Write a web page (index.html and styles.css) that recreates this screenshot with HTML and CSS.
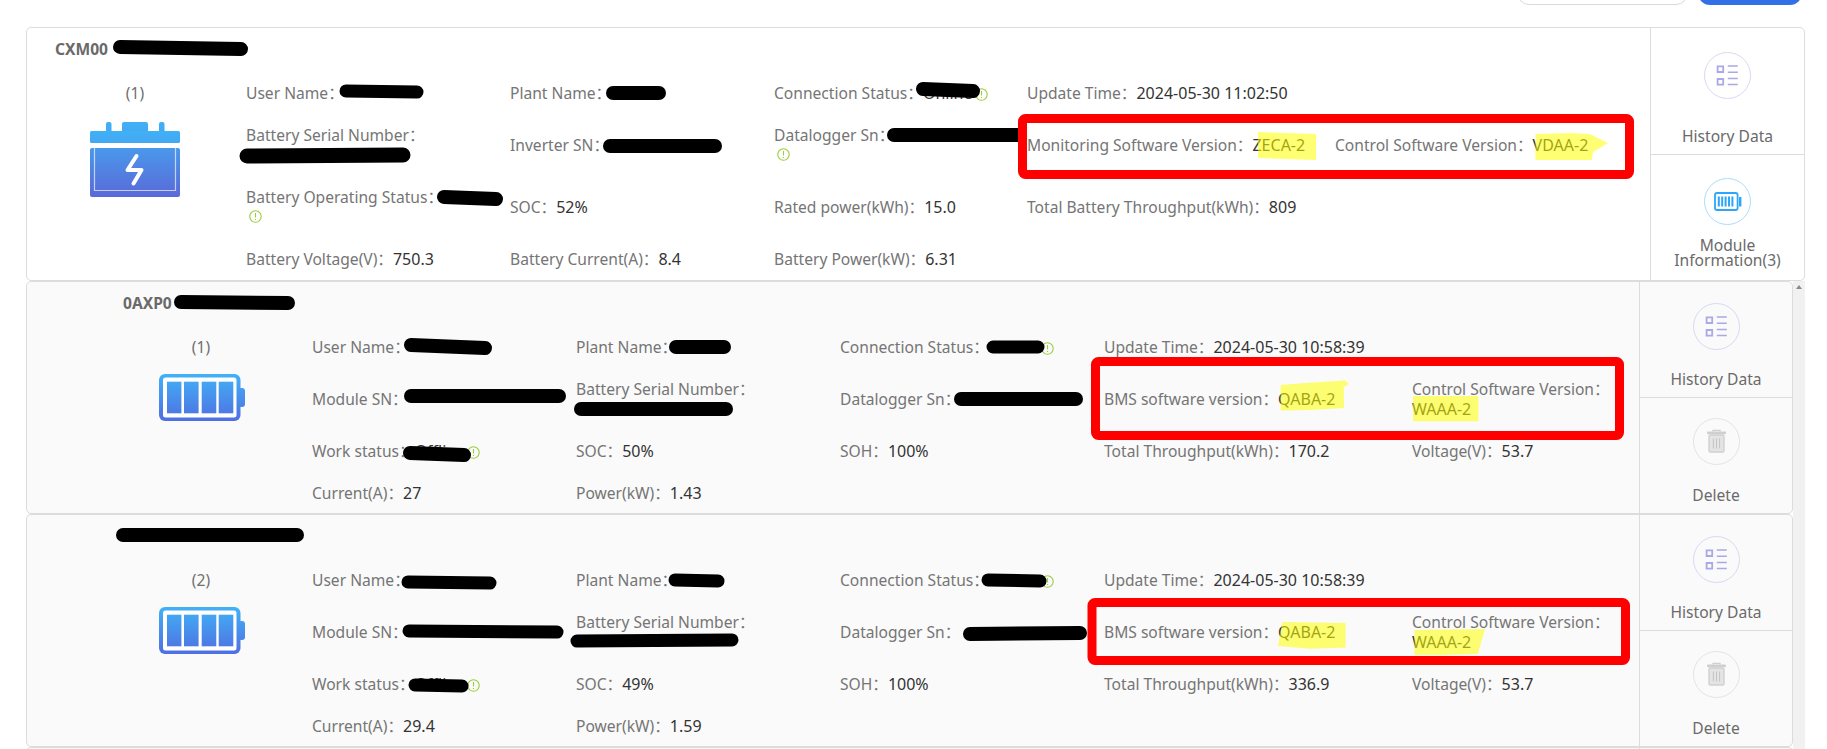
FILE: index.html
```html
<!DOCTYPE html>
<html lang="en">
<head>
<meta charset="utf-8">
<title>Battery modules</title>
<link rel="stylesheet" href="styles.css">
</head>
<body>
<svg width="0" height="0" class="defs">
  <defs>
    <linearGradient id="gTop" x1="0" y1="0" x2="0" y2="1"><stop offset="0" stop-color="#40b0f7"/><stop offset="1" stop-color="#44a8f3"/></linearGradient>
    <linearGradient id="gBox" x1="0" y1="0" x2="0" y2="1"><stop offset="0" stop-color="#4a98eb"/><stop offset="1" stop-color="#5a69d8"/></linearGradient>
    <linearGradient id="gCell" gradientUnits="userSpaceOnUse" x1="0" y1="0" x2="0" y2="47"><stop offset="0" stop-color="#41b1f7"/><stop offset="1" stop-color="#4f6fe1"/></linearGradient>
    <symbol id="i-info" viewBox="0 0 13 13">
      <circle cx="6.5" cy="6.5" r="5.7" fill="none" stroke="#9ccd3e" stroke-width="1.1"/>
      <path d="M6.5 3v4.6M6.5 9v1" stroke="#9ccd3e" stroke-width="1.1" fill="none"/>
    </symbol>
    <symbol id="i-history" viewBox="0 0 47 47">
      <circle cx="23.5" cy="23.5" r="23" fill="none" stroke="#d9d7f4"/>
      <path d="M13.6 14.3h5.6v5.7h-5.6zM13.6 27h5.6v5.7h-5.6z" fill="none" stroke="#aba8e6" stroke-width="1.8"/>
      <path d="M23.8 14h10M23.8 20.2h10M23.8 26.6h10M23.8 32.6h10" fill="none" stroke="#aba8e6" stroke-width="1.5"/>
    </symbol>
    <symbol id="i-module" viewBox="0 0 47 47">
      <circle cx="23.5" cy="23.5" r="23" fill="none" stroke="#a9dcfd"/>
      <rect x="11" y="15" width="22.6" height="17" rx="2" fill="none" stroke="#2ba6fb" stroke-width="1.8"/>
      <path d="M14.8 18.5v10M18.2 18.5v10M21.6 18.5v10M25 18.5v10M28.4 18.5v10" stroke="#2ba6fb" stroke-width="2" fill="none"/>
      <rect x="35" y="19" width="2.4" height="9.5" fill="#2ba6fb"/>
    </symbol>
    <symbol id="i-delete" viewBox="0 0 47 47">
      <circle cx="23.5" cy="23.5" r="23" fill="none" stroke="#e3e3e3"/>
      <path d="M20 13.6v-1.2h7v1.2" fill="none" stroke="#cfcfcf" stroke-width="1.4"/>
      <rect x="14" y="13.6" width="19" height="2.6" rx="1" fill="#cfcfcf"/>
      <rect x="16" y="17" width="15" height="17" rx="1.5" fill="#e4e4e4" stroke="#d0d0d0" stroke-width="1.4"/>
      <path d="M20.4 20.5v10M23.5 20.5v10M26.6 20.5v10" stroke="#c4c4c4" fill="none"/>
    </symbol>
    <symbol id="i-pack" viewBox="0 0 86 47">
      <rect width="81.5" height="47" rx="6" fill="url(#gCell)"/>
      <rect x="79" y="14" width="7" height="19" rx="3" fill="url(#gCell)"/>
      <rect x="4" y="3.5" width="73.5" height="40" rx="2.5" fill="#fff"/>
      <rect x="8" y="7.7" width="14.4" height="31.6" fill="url(#gCell)"/>
      <rect x="25" y="7.7" width="14.6" height="31.6" fill="url(#gCell)"/>
      <rect x="42.7" y="7.7" width="14.6" height="31.6" fill="url(#gCell)"/>
      <rect x="59.7" y="7.7" width="14.6" height="31.6" fill="url(#gCell)"/>
    </symbol>
  </defs>
</svg>

<header class="toolbar">
  <div class="btn btn-outline"></div>
  <div class="btn btn-primary"></div>
</header>

<main class="board">
  <article class="card">
    <div class="main">
      <h2 class="title">CXM00</h2>
      <div class="body">
        <div class="device">
          <div class="count">(1)</div>
          <svg class="icon-storage" viewBox="0 0 90 75">
            <g fill="url(#gTop)">
              <rect x="16" y="0" width="5.5" height="12" rx="2"/>
              <rect x="32" y="0" width="26" height="12" rx="2"/>
              <rect x="69" y="0" width="5.5" height="12" rx="2"/>
              <rect x="0" y="9" width="90" height="12" rx="1.5"/>
            </g>
            <rect x="0" y="26" width="90" height="49" rx="2" fill="url(#gBox)"/>
            <path d="M4.5 26v42.5h81V26" fill="none" stroke="#fff" stroke-opacity=".65" stroke-width="1.2"/>
            <path d="M46.5 34L37.5 48H51.5L43.5 61.5" fill="none" stroke="#fff" stroke-width="4" stroke-linecap="round" stroke-linejoin="round"/>
          </svg>
        </div>
        <div class="grid grid-storage">
          <div class="field"><span class="k">User Name：</span></div>
          <div class="field"><span class="k">Plant Name：</span></div>
          <div class="field"><span class="k">Connection Status：</span><span class="v state">Online</span><svg class="info"><use href="#i-info"/></svg></div>
          <div class="field"><span class="k">Update Time：</span><span class="v">2024-05-30 11:02:50</span></div>
          <div></div>

          <div class="field"><span class="k">Battery Serial Number：</span><span class="blank"></span></div>
          <div class="field"><span class="k">Inverter SN：</span></div>
          <div class="field"><span class="k">Datalogger Sn：</span><svg class="info info-below"><use href="#i-info"/></svg></div>
          <div class="field nowrap"><span class="k">Monitoring Software Version：</span><span class="v">ZECA-2</span></div>
          <div class="field nowrap"><span class="k">Control Software Version：</span><span class="v">VDAA-2</span></div>

          <div class="field"><span class="k">Battery Operating Status：</span><svg class="info info-below"><use href="#i-info"/></svg></div>
          <div class="field"><span class="k">SOC：</span><span class="v">52%</span></div>
          <div class="field"><span class="k">Rated power(kWh)：</span><span class="v">15.0</span></div>
          <div class="field"><span class="k">Total Battery Throughput(kWh)：</span><span class="v">809</span></div>
          <div></div>

          <div class="field"><span class="k">Battery Voltage(V)：</span><span class="v">750.3</span></div>
          <div class="field"><span class="k">Battery Current(A)：</span><span class="v">8.4</span></div>
          <div class="field"><span class="k">Battery Power(kW)：</span><span class="v">6.31</span></div>
        </div>
      </div>
    </div>
    <aside class="actions">
      <div class="action action-tall">
        <svg class="round"><use href="#i-history"/></svg>
        <span class="action-label">History Data</span>
      </div>
      <div class="action action-module">
        <svg class="round"><use href="#i-module"/></svg>
        <span class="action-label">Module Information(3)</span>
      </div>
    </aside>
  </article>

  <div class="scroller">
    <div class="list">
      <article class="card card-sub">
        <div class="main">
          <h2 class="title">0AXP0</h2>
          <div class="body">
            <div class="device">
              <div class="count">(1)</div>
              <svg class="icon-pack"><use href="#i-pack"/></svg>
            </div>
            <div class="grid grid-module">
              <div class="field"><span class="k">User Name：</span></div>
              <div class="field"><span class="k">Plant Name：</span></div>
              <div class="field"><span class="k">Connection Status：</span><span class="v state">Offline</span><svg class="info"><use href="#i-info"/></svg></div>
              <div class="field"><span class="k">Update Time：</span><span class="v">2024-05-30 10:58:39</span></div>
              <div></div>

              <div class="field"><span class="k">Module SN：</span></div>
              <div class="field"><span class="k">Battery Serial Number：</span><span class="blank"></span></div>
              <div class="field"><span class="k">Datalogger Sn：</span></div>
              <div class="field"><span class="k">BMS software version：</span><span class="v">QABA-2</span></div>
              <div class="field"><span class="k">Control Software Version：</span><span class="v v-block">WAAA-2</span></div>

              <div class="field"><span class="k">Work status：</span><span class="v state">Offline</span><svg class="info"><use href="#i-info"/></svg></div>
              <div class="field"><span class="k">SOC：</span><span class="v">50%</span></div>
              <div class="field"><span class="k">SOH：</span><span class="v">100%</span></div>
              <div class="field"><span class="k">Total Throughput(kWh)：</span><span class="v">170.2</span></div>
              <div class="field"><span class="k">Voltage(V)：</span><span class="v">53.7</span></div>

              <div class="field"><span class="k">Current(A)：</span><span class="v">27</span></div>
              <div class="field"><span class="k">Power(kW)：</span><span class="v">1.43</span></div>
            </div>
          </div>
        </div>
        <aside class="actions">
          <div class="action action-history">
            <svg class="round"><use href="#i-history"/></svg>
            <span class="action-label">History Data</span>
          </div>
          <div class="action action-delete">
            <svg class="round"><use href="#i-delete"/></svg>
            <span class="action-label">Delete</span>
          </div>
        </aside>
      </article>

      <article class="card card-sub">
        <div class="main">
          <h2 class="title"></h2>
          <div class="body">
            <div class="device">
              <div class="count">(2)</div>
              <svg class="icon-pack"><use href="#i-pack"/></svg>
            </div>
            <div class="grid grid-module">
              <div class="field"><span class="k">User Name：</span></div>
              <div class="field"><span class="k">Plant Name：</span></div>
              <div class="field"><span class="k">Connection Status：</span><span class="v state">Offline</span><svg class="info"><use href="#i-info"/></svg></div>
              <div class="field"><span class="k">Update Time：</span><span class="v">2024-05-30 10:58:39</span></div>
              <div></div>

              <div class="field"><span class="k">Module SN：</span></div>
              <div class="field"><span class="k">Battery Serial Number：</span><span class="blank"></span></div>
              <div class="field"><span class="k">Datalogger Sn：</span></div>
              <div class="field"><span class="k">BMS software version：</span><span class="v">QABA-2</span></div>
              <div class="field"><span class="k">Control Software Version：</span><span class="v v-block">WAAA-2</span></div>

              <div class="field"><span class="k">Work status：</span><span class="v state">Offline</span><svg class="info"><use href="#i-info"/></svg></div>
              <div class="field"><span class="k">SOC：</span><span class="v">49%</span></div>
              <div class="field"><span class="k">SOH：</span><span class="v">100%</span></div>
              <div class="field"><span class="k">Total Throughput(kWh)：</span><span class="v">336.9</span></div>
              <div class="field"><span class="k">Voltage(V)：</span><span class="v">53.7</span></div>

              <div class="field"><span class="k">Current(A)：</span><span class="v">29.4</span></div>
              <div class="field"><span class="k">Power(kW)：</span><span class="v">1.59</span></div>
            </div>
          </div>
        </div>
        <aside class="actions">
          <div class="action action-history">
            <svg class="round"><use href="#i-history"/></svg>
            <span class="action-label">History Data</span>
          </div>
          <div class="action action-delete">
            <svg class="round"><use href="#i-delete"/></svg>
            <span class="action-label">Delete</span>
          </div>
        </aside>
      </article>

      <article class="card card-sub card-next">
        <div class="main"></div>
        <aside class="actions"></aside>
      </article>
    </div>
    <div class="scrollbar"><span class="scroll-up"></span></div>
  </div>
</main>

<svg class="markup" viewBox="0 0 1827 749">
  <g class="marker">
    <path d="M1258 132L1316 134V160L1258 158Z"/>
    <path d="M1535.5 134L1570 133L1590 134L1608 143L1593 152L1592 160H1535.5Z"/>
    <path d="M1280.6 385L1305 383L1345 380.5L1349 384L1343.7 387L1344 408L1310 410L1280.6 410.6Z"/>
    <path d="M1413 396H1478.4V421.3H1413Z"/>
    <path d="M1282.5 622L1345.6 623V647.5L1310 648.7L1278 646Z"/>
    <path d="M1414.5 630L1485 629L1477.7 654L1440 655H1414.5Z"/>
  </g>
  <g class="ink">
    <path stroke-width="14" d="M120 47L241 49"/>
    <path stroke-width="13" d="M346 91L417 92"/>
    <path stroke-width="15" d="M247 156L403 155"/>
    <path stroke-width="14" d="M444 197L496 199"/>
    <path stroke-width="14" d="M613 93L659 93"/>
    <path stroke-width="14" d="M610 146L715 146"/>
    <path stroke-width="14" d="M923 89L973 91"/>
    <path stroke-width="14" d="M894 135L1019 135"/>

    <path stroke-width="14" d="M181 302L288 303"/>
    <path stroke-width="14" d="M411 345L485 348"/>
    <path stroke-width="14" d="M411 396L559 396"/>
    <path stroke-width="14" d="M410 453L464 455"/>
    <path stroke-width="14" d="M676 347L724 347"/>
    <path stroke-width="14" d="M581 409L726 409"/>
    <path stroke-width="13" d="M993 347L1038 347"/>
    <path stroke-width="14" d="M961 399L1076 399"/>

    <path stroke-width="14" d="M123 535L297 535"/>
    <path stroke-width="13" d="M408 582L490 583"/>
    <path stroke-width="13" d="M409 631L557 632"/>
    <path stroke-width="13" d="M415 685L462 686"/>
    <path stroke-width="13" d="M675 580L718 581"/>
    <path stroke-width="13" d="M577 641L732 640"/>
    <path stroke-width="13" d="M988 580L1040 581"/>
    <path stroke-width="14" d="M970 634L1080 633"/>
  </g>
  <g class="redbox">
    <rect x="1022.5" y="118.5" width="607" height="56" rx="3"/>
    <rect x="1095.5" y="361.5" width="524" height="74" rx="3"/>
    <rect x="1092" y="602.5" width="533.5" height="58" rx="3"/>
  </g>
</svg>
</body>
</html>
```

FILE: styles.css
```css
* { box-sizing: border-box; }

html, body {
  margin: 0;
  height: 749px;
  overflow: hidden;
  background: #fff;
}

body {
  position: relative;
  font-family: "Noto Sans", "Noto Sans CJK SC", sans-serif;
  font-size: 15.6px;
  line-height: 20px;
  color: #6f6f6f;
}

.defs { position: absolute; }

.toolbar {
  height: 27px;
  padding: 0 25px 22px 0;
  display: flex;
  justify-content: flex-end;
  align-items: flex-end;
  gap: 10px;
  overflow: hidden;
}

.btn { height: 24px; flex: none; border-radius: 14px; }
.btn-outline { width: 171px; border: 1px solid #d9d9d9; background: #fff; }
.btn-primary { width: 104px; background: #3370e8; }

.board { margin-left: 26px; width: 1779px; }

.card {
  display: flex;
  border: 1px solid #dcdcdc;
  border-radius: 5px;
  background: #fff;
  height: 254px;
}

.card-sub { height: 233px; background: #fafafa; }

.card-next { border-bottom: 0; }

.main { flex: 1; min-width: 0; padding: 11px 0 0; }
.card-sub .main { padding-left: 66px; }

.title {
  margin: 0 0 24px 28px;
  height: 20px;
  font-size: 15.6px;
  line-height: 20px;
  font-weight: 700;
  color: #6a6a6a;
}
.card-sub .title { margin-left: 30px; }

.body { display: flex; }

.device { width: 219px; flex: none; padding-right: 3px; text-align: center; }
.count { line-height: 20px; }

.icon-storage { display: block; margin: 19px auto 0; width: 90px; height: 75px; }
.icon-pack { display: block; margin: 17px 0 0 66px; width: 86px; height: 47px; }

.grid { display: grid; row-gap: 22px; align-items: center; }
.grid-storage {
  grid-template-columns: 264px 264px 253px 308px auto;
  grid-template-rows: 21px auto auto auto;
  margin-top: -1px;
}
.grid-module { grid-template-columns: 264px 264px 264px 308px 220px; }

.field { padding-right: 8px; }
.nowrap { white-space: nowrap; }
.k { color: #757575; }
.v { color: #333; font-size: 16px; }
.v-block { display: block; }
.state { display: inline-block; width: 52px; white-space: nowrap; }
.blank { display: block; height: 20px; }

.info { width: 13px; height: 13px; vertical-align: -2px; }
.info-below { display: block; margin: 3px 0 4px 3px; }

.actions { width: 154px; flex: none; border-left: 1px solid #dcdcdc; display: flex; flex-direction: column; }
.card-sub .actions { width: 153px; }

.action {
  display: flex;
  flex-direction: column;
  align-items: center;
  text-align: center;
}
.action + .action { border-top: 1px solid #dcdcdc; }

.round { width: 47px; height: 47px; flex: none; }
.action-label { color: #6a6a6a; }

.action-tall { height: 126px; padding-top: 24px; }
.action-tall .action-label { margin-top: 27px; }
.action-module { flex: 1; padding-top: 23px; }
.action-module .action-label { margin-top: 13px; width: 120px; line-height: 15px; }

.action-history { height: 115px; padding-top: 21px; }
.action-history .action-label { margin-top: 19px; }
.action-delete { flex: 1; padding-top: 20px; }
.action-delete .action-label { margin-top: 20px; }

.scroller { display: flex; height: 468px; overflow: hidden; }
.list { flex: 1; min-width: 0; }

.scrollbar { width: 12px; flex: none; background: #f1f1f1; position: relative; }
.scroll-up {
  position: absolute;
  top: 4px;
  left: 3px;
  border: 3px solid transparent;
  border-top: 0;
  border-bottom: 4px solid #8a8a8a;
}

.markup {
  position: absolute;
  left: 0;
  top: 0;
  width: 1827px;
  height: 749px;
  pointer-events: none;
}

.marker path { fill: #ffff00; fill-opacity: .55; }
.redbox rect { fill: none; stroke: #ff0000; stroke-width: 9; }
.ink path { fill: none; stroke: #000; stroke-linecap: round; }
```
